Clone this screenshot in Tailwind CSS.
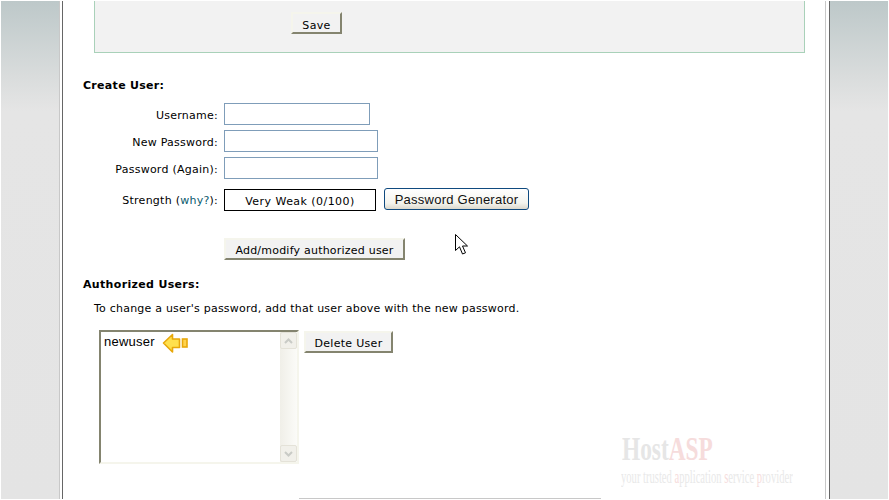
<!DOCTYPE html>
<html>
<head>
<meta charset="utf-8">
<script src="https://cdn.jsdelivr.net/npm/@tailwindcss/browser@4"></script>
</head>
<body class="bg-white">
<div class="relative flex h-[500px] w-[889px] overflow-hidden bg-white py-px pl-px pr-px font-['DejaVu_Sans',sans-serif] text-[11px] text-black">
  <div class="h-full w-[58px] shrink-0 border-r-0 bg-[linear-gradient(to_bottom,#bdc8c9_0px,#d9dcdc_75px,#e5e5e5_110px,#e4e4e4_100%)]"></div>
  <div class="h-full w-px shrink-0 bg-[#c8c8c8]"></div>
  <div class="w-[2px] shrink-0"></div>
  <div class="h-full w-px shrink-0 bg-[#666666]"></div>

  <main class="w-[762px] shrink-0">
    <section class="ml-[31px] flex h-[52px] w-[711px] items-start border-x border-b border-[#a9d1b9] bg-[#f2f2f2] pl-[196px] pt-[11px]">
      <button class="h-[22px] w-[51px] border-2 border-[#f5f5ec] border-b-[#84846f] border-r-[#84846f] bg-[#f2f2f2] pt-[4px] tracking-[.35px]">Save</button>
    </section>

    <h2 class="ml-[20px] mt-[26px] font-bold leading-[13px] tracking-[.3px]">Create User:</h2>

    <div class="mt-[11px] flex h-[22px] items-center">
      <label class="w-[161px] pr-[6px] pt-[4px] text-right tracking-[.25px]">Username:</label>
      <div class="h-[22px] w-[146px] border-2 border-[#7f9db9] [border-width:1.5px]"></div>
    </div>
    <div class="mt-[5px] flex h-[22px] items-center">
      <label class="w-[161px] pr-[6px] pt-[4px] text-right tracking-[.25px]">New Password:</label>
      <div class="h-[22px] w-[154px] border-2 border-[#7f9db9] [border-width:1.5px]"></div>
    </div>
    <div class="mt-[5px] flex h-[22px] items-center">
      <label class="w-[161px] pr-[6px] pt-[4px] text-right tracking-[.25px]">Password (Again):</label>
      <div class="h-[22px] w-[154px] border-2 border-[#7f9db9] [border-width:1.5px]"></div>
    </div>
    <div class="mt-[9px] flex h-[23px] items-start">
      <label class="mt-[5px] w-[161px] pr-[6px] text-right tracking-[.25px]">Strength (<a class="text-[#0b5a6e]">why?</a>):</label>
      <div class="mt-px h-[22px] w-[152px] border border-black pt-px text-center leading-[22px] tracking-[.45px]">Very Weak (0/100)</div>
      <button class="ml-[8px] h-[22px] w-[145px] rounded-[3px] border border-[#0f4a7f] bg-[linear-gradient(to_bottom,#ffffff,#f4f4ee_70%,#dcd8cc)] pt-[2px] font-['Liberation_Sans',sans-serif] text-[13px] leading-[18px] tracking-[.25px] text-[#111111]">Password Generator</button>
    </div>

    <div class="ml-[161px] mt-[27px] flex">
      <button class="h-[22px] w-[181px] border-2 border-[#f5f5ec] border-b-[#84846f] border-r-[#84846f] bg-[#f2f2f2] pt-[3px] tracking-[.22px]">Add/modify authorized user</button>
    </div>

    <h2 class="ml-[20px] mt-[18px] font-bold leading-[13px] tracking-[.33px]">Authorized Users:</h2>
    <p class="ml-[31px] mt-[11px] leading-[13px] tracking-[.22px]">To change a user's password, add that user above with the new password.</p>

    <div class="ml-[36px] mt-[15px] flex items-start">
      <div class="relative flex h-[134px] w-[200px] border-y-2 border-l-2 border-[#84846f] border-b-[#f5f5ec] border-r-[#f5f5ec] border-r-2 bg-white">
        <div class="flex-1 pl-[3px] pt-[2px] font-['Liberation_Sans',sans-serif] text-[13px] leading-[16px] tracking-[.25px]">newuser</div>
        <svg class="absolute left-[61px] top-[1px]" width="27" height="21" viewBox="0 0 27 21">
          <path d="M1.5 10 L10.5 1.5 L10.5 6 L17.5 6 L17.5 14.5 L10.5 14.5 L10.5 19 Z" fill="#ffe04d" stroke="#e8a80a" stroke-width="1.6" stroke-linejoin="round"/>
          <rect x="20.5" y="6" width="4.5" height="8" fill="#ffd34d" stroke="#e8a80a" stroke-width="1.6"/>
        </svg>
        <div class="flex h-full w-[17px] flex-col justify-between bg-[linear-gradient(to_right,#f0efe8,#fbfbf8)]">
          <div class="flex h-[17px] w-[17px] items-center justify-center rounded-[2px] border border-[#e4e2d8] bg-[#f1f0ea]">
            <svg width="9" height="6" viewBox="0 0 9 6"><path d="M1 5 L4.5 1.5 L8 5" fill="none" stroke="#c9cbc6" stroke-width="2"/></svg>
          </div>
          <div class="flex h-[17px] w-[17px] items-center justify-center rounded-[2px] border border-[#e4e2d8] bg-[#f1f0ea]">
            <svg width="9" height="6" viewBox="0 0 9 6"><path d="M1 1 L4.5 4.5 L8 1" fill="none" stroke="#c9cbc6" stroke-width="2"/></svg>
          </div>
        </div>
      </div>
      <button class="ml-[5px] mt-px h-[22px] w-[89px] border-2 border-[#f5f5ec] border-b-[#84846f] border-r-[#84846f] bg-[#f2f2f2] pt-[3px] tracking-[.3px]">Delete User</button>
    </div>
  </main>

  <div class="h-full w-px shrink-0 bg-[#c8c8c8]"></div>
  <div class="w-[3px] shrink-0"></div>
  <div class="h-full w-px shrink-0 bg-[#666666]"></div>
  <div class="h-full flex-1 bg-[linear-gradient(to_bottom,#bdc8c9_0px,#d9dcdc_75px,#e5e5e5_110px,#e4e4e4_100%)]"></div>

  <div class="absolute left-[299px] top-[498px] h-px w-[302px] bg-[#c8c8c8]"></div>

  <svg class="absolute left-[454px] top-[233px]" width="16" height="24" viewBox="0 0 16 24">
    <path d="M1.5 1.5 L1.5 17.5 L5.5 13.8 L8.5 21 L11.5 19.8 L8.5 13 L13.5 13 Z" fill="#fff" stroke="#000" stroke-width="1"/>
  </svg>

  <div class="absolute left-[622px] top-[430px] origin-left whitespace-nowrap font-['Liberation_Serif',serif] text-[34px] font-bold leading-[38px] text-[#e6e6e6] [transform:scaleX(.687)]">Host<span class="text-[#f6dcdc]">ASP</span></div>
  <div class="absolute left-[621px] top-[467px] origin-left whitespace-nowrap font-['Liberation_Serif',serif] text-[18px] leading-[20px] text-[#e9e9e9] [transform:scaleX(.588)]">your trusted <span class="text-[#f6dcdc]">a</span>pplication <span class="text-[#f6dcdc]">s</span>ervice <span class="text-[#f6dcdc]">p</span>rovider</div>
</div>
</body>
</html>
